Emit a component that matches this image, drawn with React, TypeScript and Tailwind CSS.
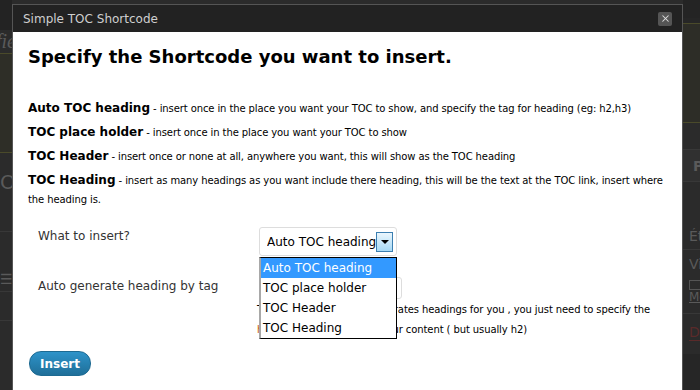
import { X } from "lucide-react";

const font = { fontFamily: '"DejaVu Sans", Verdana, sans-serif' };

function Backdrop({ side }: { side: "left" | "right" }) {
  if (side === "left") {
    return (
      <div className="w-[12px] shrink-0 overflow-hidden bg-[#2b2b2b] text-[#5a5a5a] flex flex-col">
        <div className="h-[30px] bg-[#232323]" />
        <div className="h-[23px] text-[20px] italic leading-[22px] -ml-[4px]" style={{ fontFamily: '"Liberation Serif", serif' }}>fie</div>
        <div className="h-[100px] border-y border-[#4a4a2a] bg-[#2e2e27]" />
        <div className="h-[48px] pt-[14px] text-[20px]">O</div>
        <div className="h-[30px]" />
        <div className="h-[40px] border-t border-[#383838]" />
        <div className="h-[20px] text-[14px] leading-[16px]">☰</div>
        <div className="h-[30px] border-y border-[#383838]" />
        <div className="h-[40px]" />
        <div className="flex-1" />
      </div>
    );
  }
  return (
    <div className="flex-1 overflow-hidden bg-[#2b2b2b] text-[#5a5a5a] flex flex-col">
      <div className="h-[18px] bg-[#242424]" />
      <div className="h-[5px] bg-[#262626]" />
      <div className="h-[100px] border-y border-[#4a4a2a] bg-[#2d2d27]" />
      <div className="h-[26px]" />
      <div className="h-[33px] bg-[#303030] border-y border-[#383838] text-[14px] font-bold pl-[10px] pt-[6px]">P</div>
      <div className="h-[40px]" />
      <div className="h-[28px] border-b border-[#383838] text-[14px] pl-[6px] pt-[4px]">Ét</div>
      <div className="h-[28px] text-[14px] pl-[6px] pt-[4px]">Vi</div>
      <div className="h-[36px] border-b border-[#383838] text-[12px] pl-[6px] underline leading-[14px] pt-[2px]">
        <div className="w-[12px] h-[10px] border border-[#555]" />
        Mo
      </div>
      <div className="h-[40px] pl-[6px] pt-[8px] text-[14px] text-[#5a2a2a]">
        <span className="border-b border-[#5a2a2a]">D</span>
      </div>
      <div className="flex-1 bg-[#262626]" />
    </div>
  );
}

function Row({ label, desc }: { label: string; desc: string }) {
  return (
    <p className="text-[10px] tracking-[-0.1px] leading-[19px] text-black mb-[5px]">
      <b className="text-[12px] tracking-normal font-bold">{label}</b> - {desc}
    </p>
  );
}

export default function App() {
  return (
    <div className="w-[700px] h-[390px] overflow-hidden flex bg-[#2b2b2b]" style={font}>
      <Backdrop side="left" />
      <div className="w-[671px] shrink-0 mt-[4px] flex flex-col bg-white border border-[#555] border-b-0">
        <div className="h-[27px] bg-[#222] flex items-center justify-between pl-[10px] pr-[10px]">
          <span className="text-[12px] text-[#cfcfcf] pt-[1px]">Simple TOC Shortcode</span>
          <span className="w-[14px] h-[14px] rounded-[2px] bg-[#555] flex items-center justify-center">
            <X size={11} strokeWidth={2.2} color="#e0e0e0" />
          </span>
        </div>
        <div className="px-[15px] pt-[13px] flex-1">
          <h1 className="text-[18px] font-bold text-black leading-[24px]">Specify the Shortcode you want to insert.</h1>
          <div className="mt-[30px]">
            <Row label="Auto TOC heading" desc="insert once in the place you want your TOC to show, and specify the tag for heading (eg: h2,h3)" />
            <Row label="TOC place holder" desc="insert once in the place you want your TOC to show" />
            <Row label="TOC Header" desc="insert once or none at all, anywhere you want, this will show as the TOC heading" />
            <Row label="TOC Heading" desc="insert as many headings as you want include there heading, this will be the text at the TOC link, insert where the heading is." />
          </div>
          <div className="pl-[10px] mt-[18px] text-[12px] text-[#333]">
            <div className="flex items-start">
              <span className="w-[221px] pt-[1px] leading-[16px]">What to insert?</span>
              <div className="relative">
                <div className="w-[138px] h-[29px] border border-[#ddd] rounded-[3px] flex items-center pl-[7px] text-black whitespace-nowrap overflow-hidden">
                  <span className="w-[109px] shrink-0 overflow-hidden">Auto TOC heading</span>
                  <span className="w-[17px] h-[20px] shrink-0 border border-[#3c7fb1] bg-gradient-to-b from-[#eaf6fd] to-[#a7d9f5] flex items-center justify-center">
                    <span className="w-0 h-0 border-l-[4px] border-r-[4px] border-t-[4px] border-l-transparent border-r-transparent border-t-black" />
                  </span>
                </div>
                <div className="absolute left-0 top-[30px] w-[138px] bg-white border border-black border-l-[2px] border-l-[#a8a8a8] z-10 text-black whitespace-nowrap">
                  <div className="h-[20px] leading-[20px] bg-[#3399ff] text-white pl-[2px]">Auto TOC heading</div>
                  <div className="h-[20px] leading-[20px] pl-[2px]">TOC place holder</div>
                  <div className="h-[20px] leading-[20px] pl-[2px]">TOC Header</div>
                  <div className="h-[20px] leading-[20px] pl-[2px]">TOC Heading</div>
                </div>
              </div>
            </div>
            <div className="flex items-start mt-[21px]">
              <span className="w-[221px] pt-[1px] leading-[16px]">Auto generate heading by tag</span>
              <div>
                <div className="w-[143px] h-[22px] border border-[#ddd] rounded-[3px]" />
                <p className="text-[10px] tracking-[-0.1px] leading-[20px] mt-[1px] -ml-[2px] text-black whitespace-nowrap">
                  This will automatically generates headings for you , you just need to specify the
                  <br />
                  <span className="text-[#c25a00]">h</span>eading tag that used in your content ( but usually h2)
                </p>
              </div>
            </div>
          </div>
          <button className="mt-[11px] ml-[1px] h-[25px] w-[62px] rounded-[12px] bg-gradient-to-b from-[#2e93c9] to-[#1f6f99] text-white text-[12px] font-bold border border-[#1d6a92]">
            Insert
          </button>
        </div>
      </div>
      <Backdrop side="right" />
    </div>
  );
}
